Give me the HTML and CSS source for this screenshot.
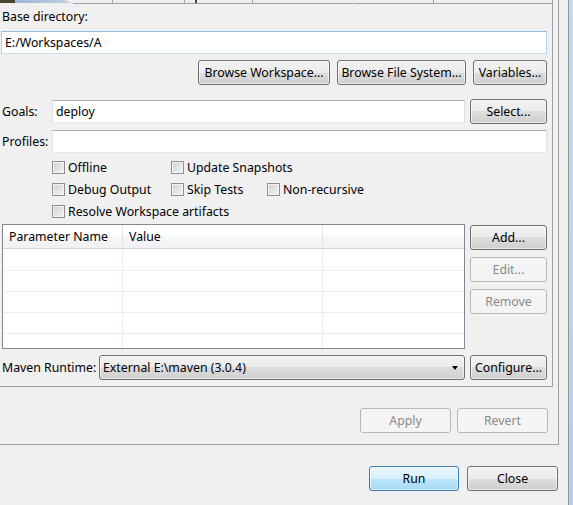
FILE: index.html
```html
<!DOCTYPE html>
<html>
<head>
<meta charset="utf-8">
<title>Run Configuration</title>
<link rel="stylesheet" href="styles.css">
</head>
<body>
<div class="window">
  <div class="main">
    <div class="folder">
      <div class="group">
        <div class="tabs">
          <div class="tab-sel"><span class="tab-icon"></span></div>
          <div class="tab ta"></div>
          <div class="tab tb"></div>
          <div class="tab tc"><span class="glyph"></span></div>
          <div class="tab td"></div>
          <div class="tab te"></div>
          <div class="tab tf"></div>
        </div>

        <div class="label base-label">Base directory:</div>
        <div class="input focus">E:/Workspaces/A</div>

        <div class="btn-row">
          <button class="btn w-bw">Browse Workspace...</button>
          <button class="btn w-bfs">Browse File System...</button>
          <button class="btn w-var">Variables...</button>
        </div>

        <div class="row goals-row">
          <div class="row-label">Goals:</div>
          <div class="input goals-input">deploy</div>
          <button class="btn w-side">Select...</button>
        </div>

        <div class="row profiles-row">
          <div class="row-label">Profiles:</div>
          <div class="input profiles-input"></div>
        </div>

        <div class="checks">
          <label class="check"><span class="box"></span>Offline</label>
          <label class="check"><span class="box"></span>Update Snapshots</label>
          <span></span>
          <label class="check"><span class="box"></span>Debug Output</label>
          <label class="check"><span class="box"></span>Skip Tests</label>
          <label class="check"><span class="box"></span>Non-recursive</label>
          <label class="check wide"><span class="box"></span>Resolve Workspace artifacts</label>
        </div>

        <div class="params">
          <div class="table">
            <div class="thead">
              <div class="th c1">Parameter Name</div>
              <div class="th c2">Value</div>
              <div class="th c3"></div>
            </div>
            <div class="tbody">
              <div class="tr"><div class="td c1"></div><div class="td c2"></div><div class="td c3"></div></div>
              <div class="tr"><div class="td c1"></div><div class="td c2"></div><div class="td c3"></div></div>
              <div class="tr"><div class="td c1"></div><div class="td c2"></div><div class="td c3"></div></div>
              <div class="tr"><div class="td c1"></div><div class="td c2"></div><div class="td c3"></div></div>
              <div class="tr"><div class="td c1"></div><div class="td c2"></div><div class="td c3"></div></div>
            </div>
          </div>
          <div class="side-btns">
            <button class="btn w-side">Add...</button>
            <button class="btn w-side disabled">Edit...</button>
            <button class="btn w-side disabled">Remove</button>
          </div>
        </div>

        <div class="row maven-row">
          <div class="maven-label">Maven Runtime:</div>
          <div class="combo"><span class="combo-text">External E:\maven (3.0.4)</span><span class="arrow"></span></div>
          <button class="btn w-side">Configure...</button>
        </div>
      </div>

      <div class="apply-row">
        <button class="btn w-apply disabled">Apply</button>
        <button class="btn w-apply disabled">Revert</button>
      </div>
    </div>

    <div class="dialog-btns">
      <button class="btn primary w-run">Run</button>
      <button class="btn w-close">Close</button>
    </div>
  </div>
  <div class="frame"></div>
</div>
</body>
</html>
```

FILE: styles.css
```css
* { box-sizing: border-box; }
html, body { margin: 0; padding: 0; }
body {
  background: #f0f0f0;
  font-family: "Noto Sans", "Open Sans", sans-serif;
  font-size: 12.3px;
  color: #000;
}

.window {
  width: 573px;
  height: 505px;
  display: flex;
  overflow: hidden;
  background: #f0f0f0;
}
.main {
  width: 568px;
  display: flex;
  flex-direction: column;
}
.frame {
  width: 5px;
  border-left: 1px solid #8e96a0;
  background: linear-gradient(#c6daee, #b7cfe7);
}

.folder {
  width: 559px;
  height: 445px;
  border-right: 1px solid #a0a0a0;
  border-bottom: 1px solid #a0a0a0;
  display: flex;
  flex-direction: column;
}
.group {
  width: 553px;
  height: 387px;
  border-right: 1px solid #a0a0a0;
  border-bottom: 1px solid #a0a0a0;
  padding: 0 5px 0 1px;
  display: flex;
  flex-direction: column;
}

/* tab strip remnants */
.tabs {
  display: flex;
  align-items: flex-start;
  height: 4px;
  margin: 0 -5px 0 -1px;
}
.tab-sel {
  width: 73px;
  height: 3px;
  background: linear-gradient(to right, #4a4632 0, #4a4632 15px, #9db7d3 15px, #b9cde2 64px, #dfe8f1 73px);
  clip-path: polygon(0 0, 65px 0, 73px 100%, 0 100%);
}
.tab {
  height: 4px;
  border-bottom: 1px solid #a0a0a0;
  border-right: 1px solid #a0a0a0;
}
.ta { width: 40px; }
.tb { width: 72px; }
.tc { width: 68px; }
.td { width: 100px; }
.te { width: 81px; }
.tf { flex: 1; border-right: none; }
.glyph {
  display: block;
  width: 2px;
  height: 3px;
  margin-left: 10px;
  background: #27467a;
}

.label { line-height: 16px; padding-left: 1px; }
.base-label { margin-top: 5px; }

.input {
  height: 23px;
  border: 1px solid;
  border-color: #abadb3 #dbdfe6 #e3e9ef #e2e3ea;
  background: #fff;
  padding-left: 3px;
  line-height: 21px;
  white-space: nowrap;
}
.input.focus {
  margin-top: 6px;
  border-color: #94bbe0 #b5d2ec #c5dff1 #b5d2ec;
}

.btn {
  height: 25px;
  border: 1px solid #707070;
  border-radius: 3px;
  background: linear-gradient(#f2f2f2 0%, #ebebeb 50%, #dddddd 50%, #cfcfcf 100%);
  box-shadow: inset 0 0 0 1px rgba(255, 255, 255, 0.55);
  font-family: inherit;
  font-size: 12.3px;
  color: #000;
  padding: 0;
  line-height: 21px;
  white-space: nowrap;
}
.btn.disabled {
  border-color: #b6b9bb;
  background: #f4f4f4;
  box-shadow: none;
  color: #8a8a8a;
}
.btn.primary {
  border-color: #3c7fb1;
  background: linear-gradient(#eaf6fd 0%, #d9f0fc 50%, #bee6fd 50%, #a7d9f5 100%);
}

.btn-row {
  display: flex;
  justify-content: flex-end;
  gap: 7px;
  margin-top: 6px;
}
.w-bw { width: 132px; }
.w-bfs { width: 129px; }
.w-var { width: 74px; }
.w-side { width: 77px; }
.w-apply { width: 91px; }
.w-run { width: 90px; }
.w-close { width: 91px; }

.row {
  display: flex;
  align-items: center;
  height: 25px;
}
.row-label { width: 51px; padding-left: 1px; }
.goals-row { margin-top: 14px; }
.goals-input { width: 413px; }
.goals-row .btn { margin-left: auto; }
.profiles-row { margin-top: 5px; }
.profiles-input { flex: 1; }

.checks {
  display: grid;
  grid-template-columns: 119px 96px auto;
  grid-auto-rows: 22px;
  margin-top: 2px;
  padding-left: 51px;
}
.check {
  display: flex;
  align-items: center;
  white-space: nowrap;
}
.check.wide { grid-column: 1 / 4; }
.box {
  width: 13px;
  height: 13px;
  margin-right: 3px;
  border: 1px solid #8e8f8f;
  background: linear-gradient(135deg, #cbcfd4, #f6f6f6);
  box-shadow: inset 0 0 0 1px #f4f4f4;
  flex: none;
}

.params {
  display: flex;
  margin-top: 2px;
  height: 125px;
}
.table {
  width: 463px;
  height: 125px;
  margin-left: 1px;
  border: 1px solid #828790;
  background: #fff;
  overflow: hidden;
}
.thead {
  display: flex;
  height: 24px;
  border-bottom: 1px solid #d5d5d5;
  background: linear-gradient(#ffffff 0%, #ffffff 45%, #f5f6f8 55%, #f0f1f3 100%);
}
.th {
  padding-left: 6px;
  line-height: 23px;
  white-space: nowrap;
  border-right: 1px solid #e2e3e5;
}
.c1 { width: 120px; }
.c2 { width: 200px; }
.c3 { flex: 1; border-right: none; }
.tr {
  display: flex;
  height: 21px;
  border-bottom: 1px solid #ededed;
}
.tr:first-child { height: 22px; }
.td { border-right: 1px solid #e6edf6; }
.td.c3 { border-right: none; }

.side-btns {
  margin-left: auto;
  margin-top: 1px;
  display: flex;
  flex-direction: column;
  gap: 7px;
}

.maven-row { margin-top: 6px; }
.maven-label { width: 98px; padding-left: 1px; white-space: nowrap; }
.combo {
  width: 366px;
  height: 25px;
  border: 1px solid #707070;
  border-radius: 3px;
  background: linear-gradient(#f2f2f2 0%, #ebebeb 50%, #dddddd 50%, #cfcfcf 100%);
  box-shadow: inset 0 0 0 1px rgba(255, 255, 255, 0.55);
  display: flex;
  align-items: center;
  padding-left: 3px;
  white-space: nowrap;
}
.arrow {
  margin-left: auto;
  margin-right: 6px;
  width: 0;
  height: 0;
  border-left: 3.5px solid transparent;
  border-right: 3.5px solid transparent;
  border-top: 4px solid #000;
}
.maven-row > .btn { margin-left: auto; }

.apply-row {
  display: flex;
  justify-content: flex-end;
  gap: 6px;
  margin-top: 21px;
  padding-right: 10px;
}

.dialog-btns {
  display: flex;
  justify-content: flex-end;
  gap: 8px;
  margin-top: 21px;
  padding-right: 10px;
}
```
